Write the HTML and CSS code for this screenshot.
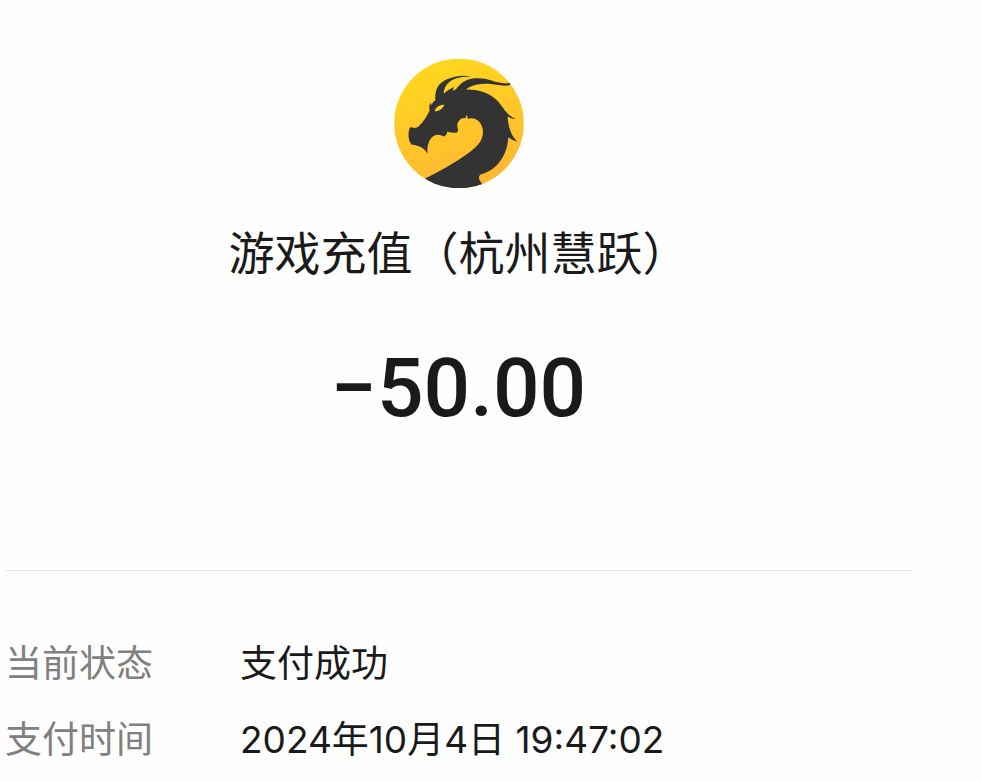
FILE: index.html
```html
<!DOCTYPE html>
<html lang="zh-CN">
<head>
  <meta charset="UTF-8">
  <meta name="viewport" content="width=device-width, initial-scale=1.0">
  <title>账单详情</title>
  <link rel="stylesheet" href="styles.css">
</head>
<body>
  <main class="bill">
    <header class="summary">
      <svg class="avatar" viewBox="30 26 390 388" role="img" aria-label="商户头像">
        <defs>
          <linearGradient id="gold" x1="0" y1="0" x2="0.3" y2="1">
            <stop offset="0" stop-color="#ffdb1c"/>
            <stop offset="1" stop-color="#ffb931"/>
          </linearGradient>
          <clipPath id="disc"><circle cx="225" cy="220" r="195"/></clipPath>
        </defs>
        <g clip-path="url(#disc)">
          <rect x="30" y="26" width="390" height="388" fill="url(#gold)"/>
          <!-- head, neck and mane -->
          <path fill="#333" d="M120 387 Q195 350 242 317 C275 294 297 275 297 246 C297 218 276 198 251 206 L249 193 L244 204 C229 202 216 218 221 234 Q225 240 219 247 Q202 249 190 244 Q188 256 180 259 Q168 253 159 254 C140 257 126 282 131 312 Q122 296 108 290 Q94 284 82 283 C72 272 71 249 76 235 Q80 228 88 233 Q97 235 103 229 C119 215 130 195 137 180 Q133 170 139 157 L142 164 Q147 154 154 150 C151 115 166 97 189 87 C210 78 239 72 263 80 C238 78 210 83 196 95 C184 105 179 117 179 130 Q194 117 210 110 L206 122 L216 117 C232 95 251 85 275 84 C306 81 329 95 354 98 Q368 100 379 97 L380 104 Q366 108 349 105 C322 101 302 98 281 103 C266 106 254 111 246 118 C288 117 318 130 338 149 C360 170 364 192 395 206 Q382 207 371 198 C374 233 382 258 402 275 Q388 273 373 261 C372 296 358 326 337 347 C324 360 308 368 291 373 C281 380 285 389 295 403 L290 425 L110 425 Z"/>
          <path fill="#ffd022" d="M152 184 Q155 165 181 163 Q176 181 152 184 Z"/>
        </g>
      </svg>
      <h1 class="merchant">游戏充值（杭州慧跃）</h1>
      <p class="amount">−50.00</p>
    </header>
    <dl class="details">
      <dt>当前状态</dt>
      <dd>支付成功</dd>
      <dt>支付时间</dt>
      <dd>2024年10月4日 19:47:02</dd>
    </dl>
  </main>
</body>
</html>
```

FILE: styles.css
```css
body {
  margin: 0;
  background: #fefefe;
  color: #1a1a1a;
  font-family: Inter, "Noto Sans CJK SC", sans-serif;
}
.bill {
  margin: 0 69px 0 5px;
  padding-top: 59px;
}
.summary {
  display: flex;
  flex-direction: column;
  align-items: center;
  padding-bottom: 132px;
  border-bottom: 1px solid #e5e5e5;
}
.avatar {
  display: block;
  width: 130px;
  height: 129px;
}
.merchant {
  margin: 30px 0 0;
  font-family: "Noto Sans CJK SC", sans-serif;
  font-size: 46px;
  font-weight: 400;
  line-height: 64px;
}
.amount {
  margin: 56px 0 0;
  font-family: Roboto, sans-serif;
  font-size: 82px;
  font-weight: 500;
  line-height: 100px;
}
.details {
  display: grid;
  grid-template-columns: 235px 1fr;
  row-gap: 20px;
  margin: 0;
  padding: 65px 0 0;
  font-size: 37px;
  font-weight: 400;
  line-height: 56px;
}
.details dt {
  color: #808080;
}
.details dd {
  margin: 0;
}
```
